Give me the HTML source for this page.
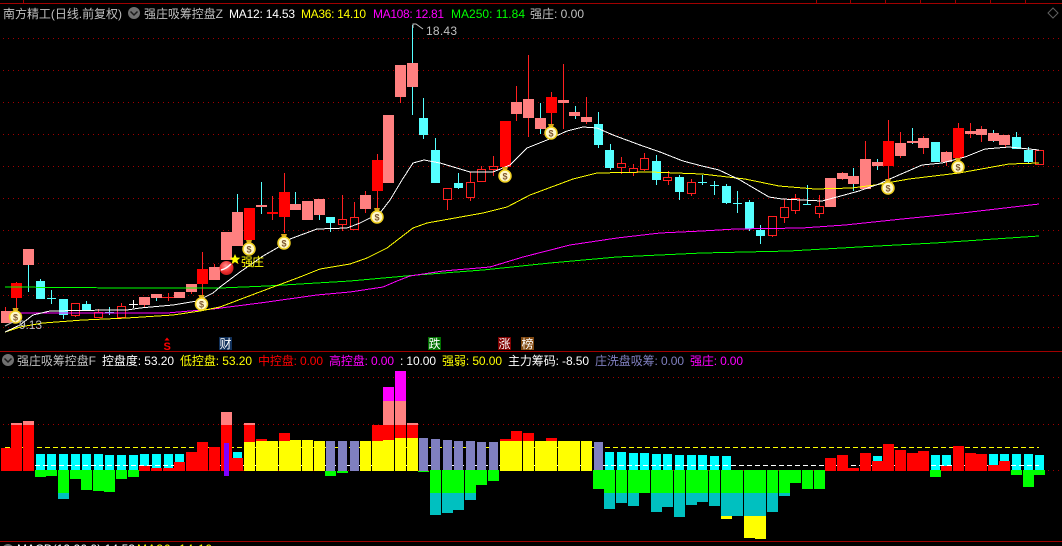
<!DOCTYPE html>
<html><head><meta charset="utf-8"><style>
html,body{margin:0;padding:0;background:#000;width:1062px;height:546px;overflow:hidden}
svg{display:block}
text{font-family:"Liberation Sans","WenQuanYi Zen Hei","Noto Sans CJK SC",sans-serif;font-size:12px}
.c{font-family:"Liberation Sans",sans-serif;font-weight:bold;font-size:9px;fill:#805830;text-anchor:middle}
</style></head><body>
<svg width="1062" height="546" viewBox="0 0 1062 546" xmlns="http://www.w3.org/2000/svg">
<rect width="1062" height="546" fill="#000"/>
<g shape-rendering="crispEdges">
<path fill="none" stroke="#a00000" d="M0 3.500H1062M23.500 0V3M816.500 0V3M850.500 0V3M885.500 0V3M920.500 0V3M955.500 0V3M990.500 0V3M1025.500 0V3M0 351.500H1062M0 541.500H1062"/>
<path fill="none" stroke="#a00000" stroke-dasharray="1 4" d="M3 38.500H1062M3 70.500H1062M3 102.500H1062M3 134.500H1062M3 166.500H1062M3 198.500H1062M3 230.500H1062M3 263.500H1062M3 295.500H1062M3 327.500H1062M3 377.500H1062M3 424.500H1062M3 470.500H1062"/>

<path fill="none" stroke="#ff2020" d="M5.500 307V323M16.500 282V308M75.500 315V317M98.500 309V317M121.500 303V317M144.500 305V307M168.500 293V301M162 297.500H174M191.500 292V294M202.500 252V295M214.500 264V267M272.500 196V220M284.500 173V233M342.500 195V231M354.500 202V217M365.500 191V213M377.500 154V210M400.500 97V103M447.500 199V210M470.500 172V201M481.500 166V181M493.500 156V176M516.500 86V121M528.500 55V137M551.500 92V125M563.500 64V129M586.500 97V124M621.500 157V174M633.500 164V176M644.500 153V171M668.500 171V185M691.500 179V196M772.500 235V237M784.500 199V223M795.500 194V214M819.500 195V218M842.500 172V180M865.500 141V159M888.500 120V183M900.500 132V158M923.500 136V154M946.500 151V166M958.500 123V128M970.500 123V138M981.500 126V142M1005.500 145V147"/>
<path fill="none" stroke="#55ffff" d="M28.500 265V292M40.500 279V281M51.500 290V304M47 298.500H56M63.500 315V319M86.500 301V304M109.500 307V315M105 312.500H114M156.500 298V301M237.500 194V212M261.500 182V214M295.500 192V204M319.500 215V220M330.500 223V232M412.500 25V115M423.500 98V139M435.500 138V150M458.500 173V189M540.500 103V134M575.500 106V119M598.500 112V148M610.500 144V170M656.500 155V185M679.500 175V200M702.500 175V185M698 182.500H707M714.500 181V195M710 185.500H719M726.500 184V204M737.500 191V213M733 203.500H742M749.500 200V231M760.500 225V244M807.500 185V205M803 204.500H811M853.500 168V191M877.500 159V170M912.500 128V144M993.500 130V142M1016.500 132V137M1028.500 147V164"/>
<path fill="none" stroke="#fff" d="M133.500 300V308M129 304.500H138"/>

<path fill="#ff8080" d="M1 311h11v12h-11zM23 249h11v16h-11zM139 297h11v8h-11zM151 294h11v4h-11zM174 292h11v6h-11zM186 284h11v8h-11zM209 267h11v13h-11zM221 232h11v28h-11zM232 212h11v34h-11zM256 205h11v2h-11zM290 204h11v6h-11zM302 201h11v19h-11zM314 199h11v16h-11zM360 195h11v14h-11zM383 115h11v68h-11zM395 65h11v32h-11zM407 63h11v24h-11zM511 102h11v12h-11zM523 99h11v19h-11zM535 118h11v11h-11zM558 100h11v3h-11zM569 112h11v4h-11zM581 117h11v5h-11zM825 178h11v29h-11zM837 173h11v6h-11zM848 176h11v8h-11zM860 159h11v30h-11zM872 162h11v4h-11zM895 143h11v13h-11zM907 141h11v2h-11zM918 138h11v10h-11zM941 152h11v10h-11zM965 131h11v3h-11zM976 129h11v6h-11zM988 133h11v8h-11zM999 135h11v10h-11z"/>
<path fill="#ff0000" d="M11 283h11v15h-11zM197 269h11v15h-11zM244 208h11v32h-11zM267 212h11v2h-11zM279 192h11v25h-11zM372 160h11v31h-11zM500 121h11v46h-11zM546 97h11v16h-11zM883 141h11v25h-11zM953 128h11v30h-11z"/>
<path fill="#55ffff" d="M36 281h9v18h-9zM59 299h9v16h-9zM82 304h9v6h-9zM326 217h9v6h-9zM419 118h9v17h-9zM431 150h9v33h-9zM454 183h9v5h-9zM594 124h9v21h-9zM605 150h9v18h-9zM652 161h9v19h-9zM675 177h9v15h-9zM722 186h9v17h-9zM745 202h9v27h-9zM756 230h9v6h-9zM931 142h9v20h-9zM1012 137h9v12h-9zM1024 150h9v12h-9z"/>
<path fill="#000" stroke="#ff2020" d="M71.500 303.500h8v12h-8zM94.500 312.500h8v5h-8zM117.500 306.500h8v11h-8zM338.500 219.500h8v5h-8zM350.500 217.500h8v12h-8zM443.500 188.500h8v11h-8zM466.500 182.500h8v15h-8zM477.500 169.500h8v12h-8zM489.500 166.500h8v3h-8zM617.500 163.500h8v4h-8zM629.500 168.500h8v4h-8zM640.500 158.500h8v11h-8zM663.500 177.500h8v3h-8zM687.500 182.500h8v11h-8zM768.500 216.500h8v19h-8zM780.500 207.500h8v10h-8zM791.500 198.500h8v12h-8zM815.500 206.500h8v7h-8zM1035.500 150.500h8v14h-8z"/>

<polyline fill="none" stroke="#00ff00" points="5,287 127,288 220,288 267,286 300,284 350,281 417,275 483,270 550,263 617,257 702,253 789,251 859,247 935,243 1039,236"/>
<polyline fill="none" stroke="#ff00ff" points="20,313 167,313 213,309 260,303 317,295 350,292 383,287 397,281 410,276 443,271 490,267 523,257 570,245 617,238 660,233 702,231 735,229 802,228 845,225 902,219 962,213 1039,204"/>
<polyline fill="none" stroke="#ffff00" points="5,332 20,327 43,323 83,320 127,318 173,315 200,311 220,307 257,293 300,277 320,269 350,264 367,258 387,248 400,238 413,228 427,223 483,213 507,207 530,195 573,179 597,173 650,172 702,174 745,179 779,186 815,189 852,188 875,185 909,179 959,173 1009,164 1039,163"/>
<polyline fill="none" stroke="#ffffff" points="5,332 20,325 33,315 50,311 110,310 127,310 140,308 173,305 197,301 213,293 220,287 240,272 263,256 277,248 290,239 317,229 347,228 360,223 380,213 390,200 402,180 413,163 424,160 440,163 470,172 493,172 510,165 527,148 547,140 567,131 583,127 597,128 613,135 640,145 660,152 683,161 702,166 719,170 740,180 769,197 782,199 822,201 837,197 859,191 879,184 892,178 922,165 942,163 965,157 985,149 1009,147 1039,150"/>

<!-- lower panel -->
<path fill="none" stroke="#ffff00" stroke-dasharray="5 3" d="M5 447.500H1039"/>
<path fill="#00ffff" d="M36 454h9v16h-9zM47 454h9v16h-9zM59 454h9v16h-9zM71 454h9v16h-9zM82 454h9v16h-9zM94 454h9v16h-9zM105 455h9v15h-9zM117 455h9v15h-9zM129 455h9v15h-9zM140 454h9v16h-9zM152 454h9v16h-9zM164 454h9v16h-9zM175 454h9v16h-9zM233 452h9v10h-9zM605 452h9v18h-9zM617 452h9v18h-9zM629 453h9v17h-9zM640 453h9v17h-9zM652 454h9v16h-9zM663 454h9v16h-9zM675 455h9v15h-9zM687 455h9v15h-9zM698 455h9v15h-9zM710 456h9v14h-9zM722 456h9v14h-9zM873 456h9v14h-9zM931 455h9v15h-9zM942 455h9v15h-9zM989 454h9v16h-9zM1000 454h9v16h-9zM1012 454h9v16h-9zM1024 454h9v16h-9zM1035 455h9v15h-9z"/>
<path fill="none" stroke="#ffffff" stroke-dasharray="5 3" d="M35 465.500H1039"/>
<path fill="#ff0000" d="M1 448h10v23h-10zM11 425h11v46h-11zM23 425h11v46h-11zM139 466h11v5h-11zM151 468h11v3h-11zM163 468h11v3h-11zM174 462h11v9h-11zM186 452h11v19h-11zM197 442h11v29h-11zM209 447h11v24h-11zM221 425h11v46h-11zM232 458h11v13h-11zM244 425h11v17h-11zM256 439h11v2h-11zM279 433h11v8h-11zM372 425h11v16h-11zM383 425h11v15h-11zM395 425h11v13h-11zM407 425h11v13h-11zM500 439h11v2h-11zM511 431h11v10h-11zM523 433h11v8h-11zM546 438h11v3h-11zM825 458h11v13h-11zM837 455h11v16h-11zM848 468h11v3h-11zM860 453h11v18h-11zM872 461h11v10h-11zM883 444h11v27h-11zM895 450h11v21h-11zM907 453h11v18h-11zM918 451h11v20h-11zM941 466h11v5h-11zM953 446h11v25h-11zM965 453h11v18h-11zM976 454h11v17h-11zM988 465h11v6h-11zM999 461h11v10h-11z"/>
<path fill="#ff8080" d="M11 423h11v2h-11zM23 421h11v4h-11zM221 412h11v13h-11zM244 423h11v2h-11zM383 401h11v24h-11zM395 401h11v24h-11zM407 423h11v2h-11z"/>
<path fill="#ff00ff" d="M383 387h11v14h-11zM395 371h11v30h-11z"/>
<path fill="#8000ff" d="M224 443h5v33h-5z"/>
<path fill="#ffff00" d="M244 442h11v29h-11zM256 441h11v30h-11zM267 441h11v30h-11zM279 441h11v30h-11zM290 440h11v31h-11zM302 440h11v31h-11zM314 441h11v30h-11zM360 441h11v30h-11zM372 441h11v30h-11zM383 440h11v31h-11zM395 438h11v33h-11zM407 438h11v33h-11zM500 441h11v30h-11zM511 441h11v30h-11zM523 441h11v30h-11zM535 441h11v30h-11zM546 441h11v30h-11zM558 441h11v30h-11zM569 441h11v30h-11zM581 441h11v30h-11zM721 516h11v3h-11zM744 516h11v22h-11zM755 516h11v23h-11z"/>
<path fill="#8080c0" d="M326 441h9v30h-9zM338 441h9v30h-9zM350 441h9v30h-9zM419 438h9v33h-9zM431 439h9v32h-9zM443 440h9v31h-9zM454 441h9v30h-9zM466 441h9v30h-9zM477 442h9v29h-9zM489 442h9v29h-9zM594 442h9v29h-9z"/>
<path fill="#00ff00" d="M35 470h11v7h-11zM46 470h11v6h-11zM58 470h11v23h-11zM70 470h11v9h-11zM81 470h11v20h-11zM93 470h11v21h-11zM104 470h11v22h-11zM116 470h11v9h-11zM128 470h11v7h-11zM325 471h11v5h-11zM337 471h11v2h-11zM418 471h11v1h-11zM430 470h11v23h-11zM442 470h11v23h-11zM453 470h11v23h-11zM465 470h11v23h-11zM476 470h11v15h-11zM488 470h11v11h-11zM593 470h11v19h-11zM604 470h11v23h-11zM616 470h11v23h-11zM628 470h11v23h-11zM639 470h11v23h-11zM651 470h11v23h-11zM662 470h11v23h-11zM674 470h11v23h-11zM686 470h11v23h-11zM697 470h11v23h-11zM709 470h11v23h-11zM721 470h11v23h-11zM732 470h11v23h-11zM744 470h11v23h-11zM755 470h11v23h-11zM767 470h11v23h-11zM779 470h11v23h-11zM790 470h11v13h-11zM802 470h11v19h-11zM814 470h11v19h-11zM930 470h11v7h-11zM1011 470h11v5h-11zM1023 470h11v17h-11zM1034 470h11v5h-11z"/>
<path fill="#00c0c0" d="M58 493h11v6h-11zM430 493h11v22h-11zM442 493h11v20h-11zM453 493h11v17h-11zM465 493h11v7h-11zM604 493h11v16h-11zM616 493h11v10h-11zM628 493h11v13h-11zM651 493h11v19h-11zM662 493h11v14h-11zM674 493h11v24h-11zM686 493h11v12h-11zM697 493h11v9h-11zM709 493h11v13h-11zM721 493h11v23h-11zM732 493h11v23h-11zM744 493h11v23h-11zM755 493h11v23h-11zM767 493h11v19h-11zM779 493h11v3h-11z"/>
<rect x="219" y="337" width="13" height="13" fill="#10305a"/>
<rect x="428" y="337" width="13" height="13" fill="#007000"/>
<rect x="498" y="337" width="13" height="13" fill="#800000"/>
<rect x="521" y="337" width="13" height="13" fill="#804810"/>
</g>

<!-- coins -->
<g transform="translate(15.500,316)"><path d="M-3-8h6l-1 3h-4z" fill="#d8a818"/><circle cy="1" r="6" fill="#fff8c8" stroke="#f0d020" stroke-width="1.500"/><text class="c" y="4.500">$</text></g>
<g transform="translate(201.500,303)"><path d="M-3-8h6l-1 3h-4z" fill="#d8a818"/><circle cy="1" r="6" fill="#fff8c8" stroke="#f0d020" stroke-width="1.500"/><text class="c" y="4.500">$</text></g>
<g transform="translate(249,248)"><path d="M-3-8h6l-1 3h-4z" fill="#d8a818"/><circle cy="1" r="6" fill="#fff8c8" stroke="#f0d020" stroke-width="1.500"/><text class="c" y="4.500">$</text></g>
<g transform="translate(284,242)"><path d="M-3-8h6l-1 3h-4z" fill="#d8a818"/><circle cy="1" r="6" fill="#fff8c8" stroke="#f0d020" stroke-width="1.500"/><text class="c" y="4.500">$</text></g>
<g transform="translate(377,216)"><path d="M-3-8h6l-1 3h-4z" fill="#d8a818"/><circle cy="1" r="6" fill="#fff8c8" stroke="#f0d020" stroke-width="1.500"/><text class="c" y="4.500">$</text></g>
<g transform="translate(505,175)"><path d="M-3-8h6l-1 3h-4z" fill="#d8a818"/><circle cy="1" r="6" fill="#fff8c8" stroke="#f0d020" stroke-width="1.500"/><text class="c" y="4.500">$</text></g>
<g transform="translate(551,132)"><path d="M-3-8h6l-1 3h-4z" fill="#d8a818"/><circle cy="1" r="6" fill="#fff8c8" stroke="#f0d020" stroke-width="1.500"/><text class="c" y="4.500">$</text></g>
<g transform="translate(888,187)"><path d="M-3-8h6l-1 3h-4z" fill="#d8a818"/><circle cy="1" r="6" fill="#fff8c8" stroke="#f0d020" stroke-width="1.500"/><text class="c" y="4.500">$</text></g>
<g transform="translate(958,166)"><path d="M-3-8h6l-1 3h-4z" fill="#d8a818"/><circle cy="1" r="6" fill="#fff8c8" stroke="#f0d020" stroke-width="1.500"/><text class="c" y="4.500">$</text></g>

<!-- ball and star -->
<defs><radialGradient id="b" cx=".45" cy=".35" r=".7"><stop offset="0" stop-color="#ff9090"/><stop offset=".6" stop-color="#f03030"/><stop offset="1" stop-color="#c01818"/></radialGradient></defs>
<circle cx="226.500" cy="268" r="7" fill="url(#b)"/>
<path d="M221 270Q226 269 231 264" stroke="#fff" stroke-width="1.500" fill="none"/>
<path d="M235 254l1.500 3.500 3.800.3-2.900 2.500.9 3.700-3.300-2-3.300 2 .9-3.700-2.900-2.500 3.800-.3z" fill="#ffff00"/>
<text x="241" y="266" fill="#ffff00" textLength="23">强庄</text>

<path d="M413 28V24H416L423 29" fill="none" stroke="#c0c0c0"/>
<text x="426" y="35" fill="#c0c0c0" textLength="31">18.43</text>
<path d="M5 326L13 322" fill="none" stroke="#c0c0c0"/>
<text x="19" y="329" fill="#c0c0c0" textLength="23">9.13</text>

<!-- signals -->
<path d="M167 337.500l2.500 3h-5z" fill="#ff0000"/>
<text x="163.500" y="350" fill="#ff0000" font-weight="bold" style="font-size:11px" textLength="7">S</text>
<text x="219.500" y="348" fill="#fff" textLength="12">财</text>
<text x="428.500" y="348" fill="#fff" textLength="12">跌</text>
<text x="498.500" y="348" fill="#fff" textLength="12">涨</text>
<text x="521.500" y="348" fill="#fff" textLength="12">榜</text>

<!-- header row -->
<text x="3" y="18" fill="#c0c0c0" textLength="119">南方精工(日线.前复权)</text>
<circle cx="134" cy="13" r="6" fill="#707070"/><path d="M130.500 11.500L134 15L137.500 11.500" stroke="#1a1a1a" stroke-width="1.500" fill="none"/>
<text x="144" y="18" fill="#c0c0c0" textLength="79">强庄吸筹控盘Z</text>
<text x="229" y="18" fill="#ffffff" textLength="66">MA12: 14.53</text>
<text x="301" y="18" fill="#ffff00" textLength="65">MA36: 14.10</text>
<text x="373" y="18" fill="#ff00ff" textLength="71">MA108: 12.81</text>
<text x="451" y="18" fill="#00ff00" textLength="74">MA250: 11.84</text>
<text x="530" y="18" fill="#c0c0c0" textLength="54">强庄: 0.00</text>
<path d="M1053 8l5 5-5 5-5-5z" fill="none" stroke="#606060"/>

<!-- lower header -->
<circle cx="8" cy="360" r="6" fill="#707070"/><path d="M4.500 358.500L8 362L11.500 358.500" stroke="#1a1a1a" stroke-width="1.500" fill="none"/>
<text x="17" y="365" fill="#c0c0c0" textLength="79">强庄吸筹控盘F</text>
<text x="102" y="365" fill="#ffffff" textLength="72">控盘度: 53.20</text>
<text x="180" y="365" fill="#ffff00" textLength="72">低控盘: 53.20</text>
<text x="258" y="365" fill="#ff0000" textLength="65">中控盘: 0.00</text>
<text x="329" y="365" fill="#ff00ff" textLength="65">高控盘: 0.00</text>
<text x="400" y="365" fill="#ffffff" textLength="36">: 10.00</text>
<text x="442" y="365" fill="#ffff00" textLength="60">强弱: 50.00</text>
<text x="508" y="365" fill="#ffffff" textLength="81">主力筹码: -8.50</text>
<text x="595" y="365" fill="#8080c0" textLength="89">庄洗盘吸筹: 0.00</text>
<text x="690" y="365" fill="#ff00ff" textLength="53">强庄: 0.00</text>

<!-- bottom row, clipped by the viewport -->
<circle cx="8" cy="550" r="6" fill="#707070"/>
<text x="17" y="553" fill="#ffffff" textLength="118">MACD(12,26,9) 14.53</text>
<text x="137" y="553" fill="#ffff00" textLength="75">MA36: 14.10</text>
</svg>
</body></html>
